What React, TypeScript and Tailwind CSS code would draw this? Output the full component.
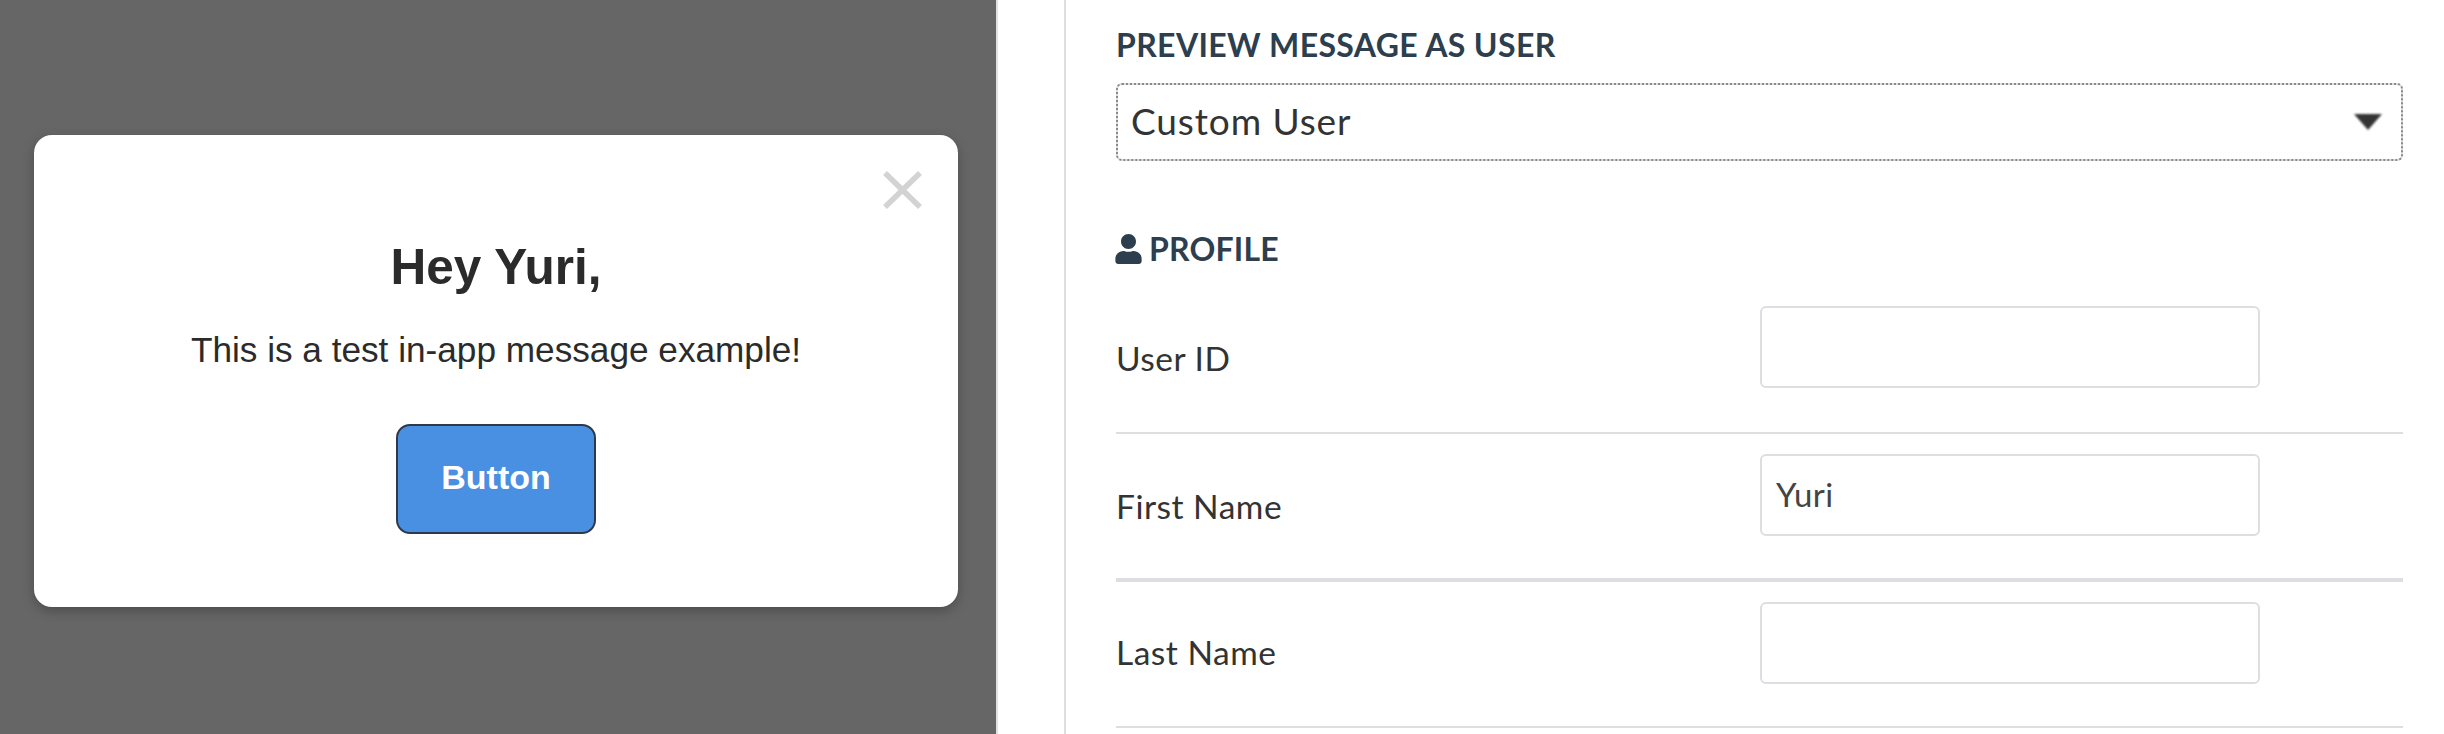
import { FaUser } from "react-icons/fa";

const fields = [
  { label: "User ID", value: "", row: "border-b-2 pb-[44px]", labelTop: "mt-[33px]" },
  { label: "First Name", value: "Yuri", row: "border-b-4 pb-[42px]", labelTop: "mt-[33px]" },
  { label: "Last Name", value: "", row: "border-b-2 pb-[42px]", labelTop: "mt-[31px]" },
];

export default function App() {
  return (
    <div className="flex h-[734px] w-[2444px] overflow-hidden bg-white">
      {/* Message preview */}
      <div className="flex w-[998px] shrink-0 justify-center border-r-2 border-[#e2e2e6] bg-[#666666] pr-[4px] pt-[135px] font-['Liberation_Sans',sans-serif]">
        <div className="relative flex h-[472px] w-[924px] flex-col items-center rounded-[18px] bg-white pt-[104px] shadow-[0_4px_12px_rgba(0,0,0,0.25)]">
          <svg className="absolute left-[849px] top-[36px] h-[38px] w-[39px]" viewBox="0 0 39 38" fill="none">
            <path d="M2 2L37 36M37 2L2 36" stroke="#d3d3d3" strokeWidth="5.5" />
          </svg>
          <h1 className="text-[49.5px] font-bold leading-[56px] text-[#2b2b2b]">Hey Yuri,</h1>
          <p className="mt-[35px] text-[35.2px] leading-[40px] text-[#2b2b2b]">This is a test in-app message example!</p>
          <button className="mt-[54px] h-[110px] w-[200px] rounded-[14px] border-2 border-[#2c3a4b] bg-[#4a90e2] pb-[3px] text-[34px] font-bold text-white">
            Button
          </button>
        </div>
      </div>

      {/* User settings */}
      <div className="ml-[66px] flex-1 border-l-2 border-[#dddde2] pl-[50px] pr-[41px] pt-[28px] font-['Lato',sans-serif]">
        <h2 className="text-[32px] font-bold leading-[34px] tracking-[0.37px] text-[#2d3e4e]">PREVIEW MESSAGE AS USER</h2>
        <div className="relative mt-[21px] h-[78px]">
          <select className="h-full w-full appearance-none rounded-[6px] border-2 border-[#dddde2] bg-white pb-[2px] pl-[13px] text-[37px] tracking-[0.9px] text-[#333333] outline-2 -outline-offset-2 outline-[#8a8a8a] outline-dotted">
            <option>Custom User</option>
          </select>
          <svg className="absolute right-[21px] top-[31px] h-[16px] w-[28px] blur-[1px]" viewBox="0 0 28 16">
            <path d="M0 0H28L14 16Z" fill="#333333" />
          </svg>
        </div>

        <h3 className="mt-[71px] flex items-center gap-[7px] text-[32px] font-bold leading-[34px] tracking-[0.2px] text-[#2d3e4e]">
          <FaUser className="-ml-[1px] h-[30px] w-[27px]" />
          PROFILE
        </h3>

        <div className="mt-[20px]">
          {fields.map((f) => (
            <div key={f.label} className={`flex items-start border-[#dddde2] pt-[20px] ${f.row}`}>
              <label className={`w-[644px] shrink-0 text-[33.5px] leading-[38px] tracking-[0.5px] text-[#333333] ${f.labelTop}`}>{f.label}</label>
              <input
                defaultValue={f.value}
                className="h-[82px] w-[500px] rounded-[6px] border-2 border-[#dddde2] bg-white pb-[2px] pl-[14px] text-[33px] tracking-[0.3px] text-[#444444]"
              />
            </div>
          ))}
        </div>
      </div>
    </div>
  );
}
